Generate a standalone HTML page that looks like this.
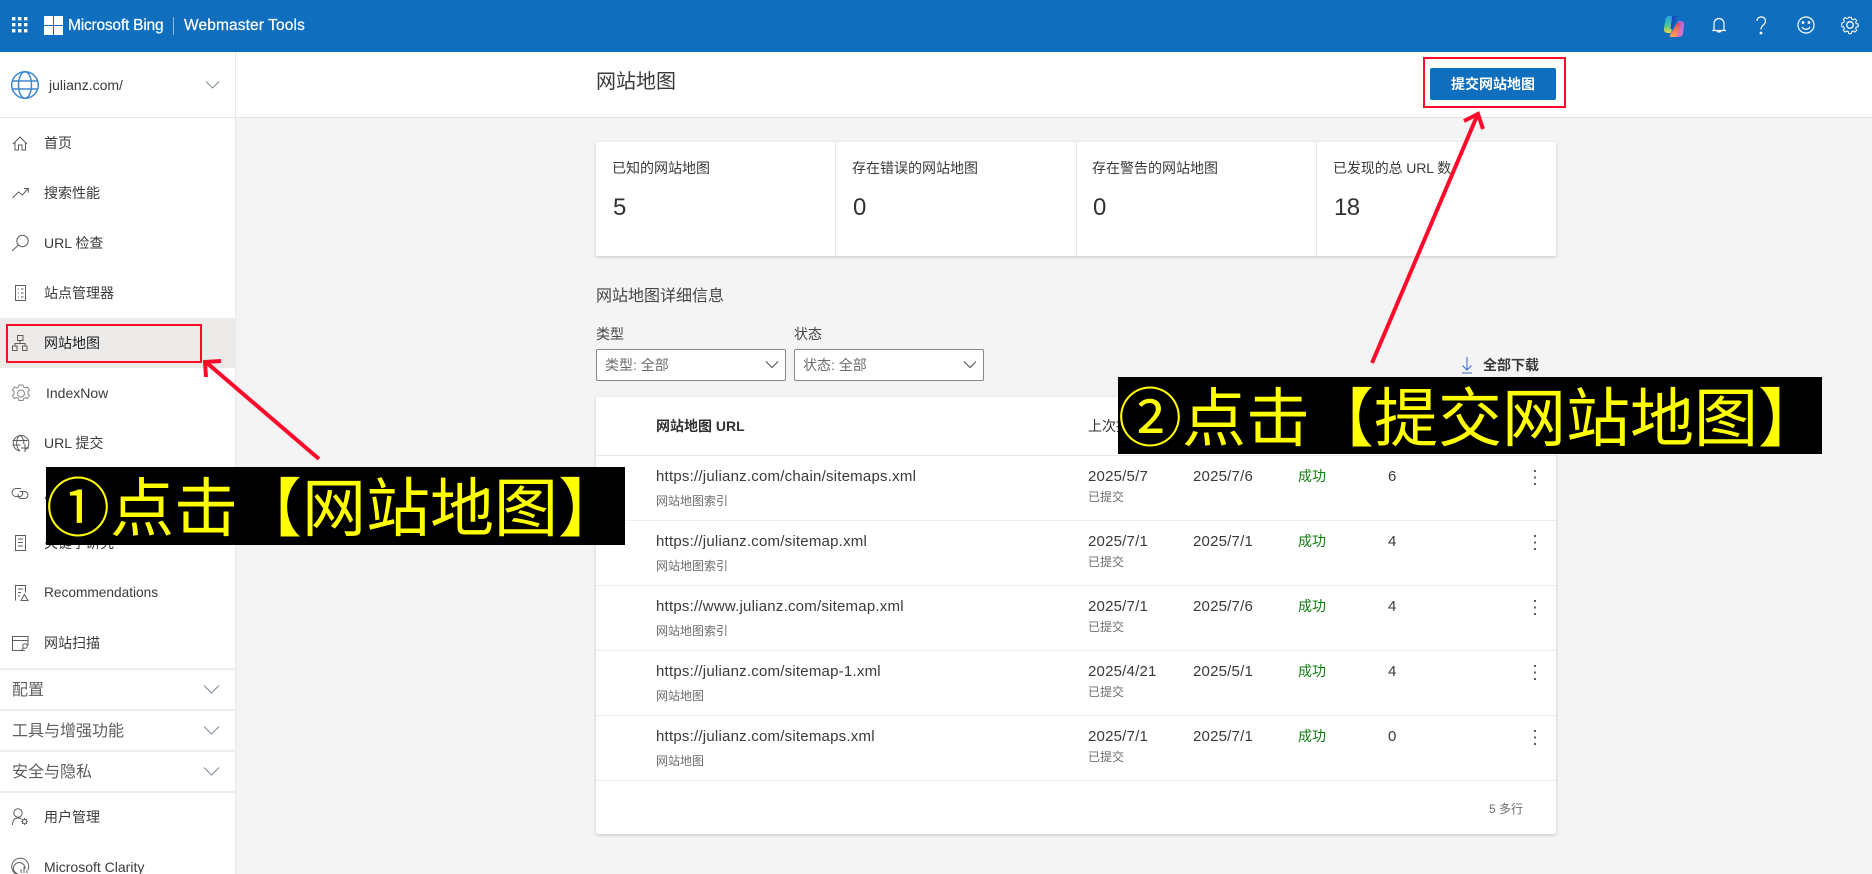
<!DOCTYPE html>
<html lang="zh-CN">
<head>
<meta charset="utf-8">
<title>网站地图 - Microsoft Bing Webmaster Tools</title>
<style>
html,body{margin:0;padding:0;width:1872px;height:874px;overflow:hidden;background:#f4f4f4}
body{position:relative;font-family:"Liberation Sans","Noto Sans CJK SC",sans-serif;color:#323130;font-size:14px}
div,svg{position:absolute}
.t{white-space:nowrap;line-height:20px;height:20px}
.nav{left:44px;color:#3b3a39}
.i{fill:none;stroke:#5f5d5b;stroke-width:1}
.grp{left:12px;font-size:16px;color:#605e5c}
.hl{left:0;width:235px;height:2px;background:#eeeeee}
.u{left:656px;font-size:15px;letter-spacing:.22px;color:#3b3a39}
.s{font-size:12px;color:#6f6d6b}
.d{font-size:15px;letter-spacing:.2px;color:#3b3a39}
.ok{left:1298px;color:#107c10}
.rl{left:596px;width:960px;height:1px;background:#eeeeee}
.lab{top:158px;color:#3b3a39}
.num{top:193px;font-size:24px;line-height:30px;height:30px;letter-spacing:-.6px;color:#323130}
.dd{top:349px;width:188px;height:30px;background:#fff;border:1px solid #8a8886;border-radius:2px}
.ann{background:#000;color:#ff0;font-size:64px;line-height:84px;white-space:nowrap;overflow:hidden}
</style>
</head>
<body>

<!-- top bar -->
<div style="left:0;top:0;width:1872px;height:52px;background:#106ebe"></div>
<svg style="left:0;top:0" width="66" height="52" fill="#fff">
<rect x="12" y="17" width="3.400" height="3.400"/><rect x="18" y="17" width="3.400" height="3.400"/><rect x="24" y="17" width="3.400" height="3.400"/>
<rect x="12" y="23" width="3.400" height="3.400"/><rect x="18" y="23" width="3.400" height="3.400"/><rect x="24" y="23" width="3.400" height="3.400"/>
<rect x="12" y="29" width="3.400" height="3.400"/><rect x="18" y="29" width="3.400" height="3.400"/><rect x="24" y="29" width="3.400" height="3.400"/>
<rect x="44" y="16" width="9" height="9"/><rect x="54" y="16" width="9" height="9"/><rect x="44" y="26" width="9" height="9"/><rect x="54" y="26" width="9" height="9"/>
</svg>
<div class="t" style="left:68px;top:16px;font-size:15.5px;color:#fff;letter-spacing:-.2px;-webkit-text-stroke:.2px #fff">Microsoft Bing</div>
<div style="left:173px;top:17px;width:1px;height:18px;background:#8ab8e0"></div>
<div class="t" style="left:184px;top:16px;font-size:15.5px;color:#fff;letter-spacing:.12px;-webkit-text-stroke:.2px #fff">Webmaster Tools</div>

<!-- copilot -->
<svg style="left:1660px;top:12px" width="28" height="28" viewBox="0 0 28 28">
<defs>
<linearGradient id="c1" x1="0" y1="0" x2="0" y2="1"><stop offset="0" stop-color="#2a9fe8"/><stop offset=".5" stop-color="#3cc6a0"/><stop offset="1" stop-color="#e8d83c"/></linearGradient>
<linearGradient id="c2" x1="0" y1="0" x2="1" y2="1"><stop offset="0" stop-color="#8a5ce8"/><stop offset="1" stop-color="#f078c0"/></linearGradient>
<linearGradient id="c3" x1="0" y1="0" x2="0" y2="1"><stop offset="0" stop-color="#e84860"/><stop offset="1" stop-color="#fba458"/></linearGradient>
</defs>
<path d="M8 4h7l-4 17H8c-3 0-4.500-2-4-4.500L5.500 7C6 5 7 4 8 4z" fill="url(#c1)"/>
<path d="M18 9h2.500c2.500 0 3.800 1.500 3.500 4l-1 8c-.3 2.500-2 4-4.500 4H14z" fill="url(#c2)"/>
<path d="M17 11h4l-3 11c-.5 2-2 3-3.500 3H10.500c-1 0-1-1-.5-2z" fill="url(#c3)"/>
<path d="M12 4h5l-4.500 13h-2z" fill="#1a4fc4"/>
</svg>
<!-- bell -->
<svg style="left:1708px;top:14px;fill:none;stroke:#fff;stroke-width:1.200" width="22" height="22" viewBox="0 0 22 22">
<path d="M6 15.500V9.500a5 5 0 0 1 10 0v6l1 1h-12zM9 16.500c.3 2 3.700 2 4 0"/>
</svg>
<!-- help -->
<svg style="left:1750px;top:14px;fill:none;stroke:#fff;stroke-width:1.200" width="22" height="24" viewBox="0 0 22 24">
<path d="M7 7c0-5.500 8.500-5.500 8.500 0 0 4-4.500 4-4.500 8.500"/><circle cx="11" cy="19" r=".8" fill="#fff"/>
</svg>
<!-- smile -->
<svg style="left:1794px;top:13px;fill:none;stroke:#fff;stroke-width:1.200" width="24" height="24" viewBox="0 0 24 24">
<circle cx="12" cy="12" r="8"/><path d="M8 14c2 3 6 3 8 0"/><circle cx="9" cy="9.500" r=".8" fill="#fff"/><circle cx="15" cy="9.500" r=".8" fill="#fff"/>
</svg>
<!-- gear -->
<svg style="left:1838px;top:13px;fill:none;stroke:#fff;stroke-width:1.300" width="24" height="24" viewBox="0 0 24 24">
<circle cx="12" cy="12" r="3.300"/>
<path d="M10.300 3.500h3.400l.5 2.500 1.800.8 2.200-1.400 2.400 2.400-1.400 2.200.8 1.800 2.500.5v3.400l-2.500.5-.8 1.800 1.400 2.200-2.400 2.400-2.200-1.400-1.800.8-.5 2.500h-3.400l-.5-2.500-1.800-.8-2.200 1.400-2.400-2.400 1.400-2.200-.8-1.800-2.500-.5V10.800l2.500-.5.8-1.800-1.400-2.200 2.400-2.400 2.200 1.400 1.800-.8z" transform="translate(12 12) scale(.78) translate(-12 -13.500)"/>
</svg>

<!-- sidebar -->
<div style="left:0;top:52px;width:235px;height:822px;background:#fff"></div>
<div style="left:235px;top:52px;width:1px;height:822px;background:#e8e8e8"></div>
<div style="left:236px;top:52px;width:1636px;height:65px;background:#fff"></div>
<div style="left:0;top:117px;width:1872px;height:1px;background:#e3e3e3"></div>

<svg style="left:10px;top:70px;fill:none;stroke:#3d87cf;stroke-width:1.500" width="30" height="30" viewBox="0 0 30 30">
<circle cx="15" cy="15" r="13.300"/><ellipse cx="15" cy="15" rx="6.500" ry="13.300"/><path d="M2.500 11h25M2.500 19h25"/>
</svg>
<div class="t" style="left:49px;top:75px;color:#3b3a39">julianz.com/</div>
<svg style="left:204px;top:80px;fill:none;stroke:#7f8a92;stroke-width:1" width="16" height="10"><path d="M2 1.500l6.500 6.500 6.500-6.500"/></svg>

<div style="left:0;top:318px;width:235px;height:50px;background:#ecebea"></div>

<div class="t nav" style="top:133px">首页</div>
<div class="t nav" style="top:183px">搜索性能</div>
<div class="t nav" style="top:233px">URL 检查</div>
<div class="t nav" style="top:283px">站点管理器</div>
<div class="t nav" style="top:333px;color:#201f1e">网站地图</div>
<div class="t nav" style="top:383px;left:46px">IndexNow</div>
<div class="t nav" style="top:433px">URL 提交</div>
<div class="t nav" style="top:483px">反向链接</div>
<div class="t nav" style="top:533px">关键字研究</div>
<div class="t nav" style="top:583px;font-size:13.7px">Recommendations</div>
<div class="t nav" style="top:633px">网站扫描</div>

<!-- sidebar icons -->
<svg style="left:0;top:118px" width="40" height="756" viewBox="0 118 40 756">
<g class="i">
<path d="M13 144l7-7 7 7M15 142.500V150h3.500v-5h3.500v5h3.500v-7.500"/>
<path d="M12.500 198l6-6 4 3 5.500-6.500M24 188.500h4.300v4"/>
<circle cx="22.500" cy="241" r="5.700"/><path d="M18.500 245l-6.500 6"/>
<path d="M15.500 285.500h10v15h-10zM18 289h1M18 293h1M18 297h1M21 289h2.500M21 293h2.500M21 297h2.500"/>
<path d="M17.500 335.500h5.500v5h-5.500zM12.500 346h4.500v4.500h-4.500zM22.500 346h4.500v4.500h-4.500zM20 340.500v3M15 346v-2.500h10v2.500"/>
<g stroke="#8a8886"><circle cx="21" cy="393.500" r="3.500"/>
<path d="M19 385h4l.5 2 2 1 2-1 2 3-1.500 1.500v2.500l1.500 1.500-2 3-2-1-2 1-.5 2h-4l-.5-2-2-1-2 1-2-3 1.500-1.500v-2.500L12.500 390l2-3 2 1 2-1z"/></g>
<path d="M25 450a7.800 7.800 0 1 0-5 1"/><path d="M20 435c-4.500 4-4.500 12 0 16M20 435c3 2.500 4 5.500 3.800 9M12.500 440.500h15M12.500 445h8"/><path d="M25 444v8M21 448h8"/>
<path d="M21 488.500h-5a4 4 0 0 0 0 8h4a3 3 0 0 0 2-5"/><path d="M19.500 491.500h5a3.500 3.500 0 0 1 0 7h-4a3 3 0 0 1-2-4.500"/>
<path d="M15.500 535.500h10v15h-10zM18 539h5M18 542.500h5M18 546h5"/>
<path d="M15.500 600.500v-15h10v7M18 589h5M18 592.500h3M18 596h2M21 600.500l3.500-6 3.500 6z"/>
<path d="M25 650.500H12.500v-14h15.500v9M12.500 640.500h15.500"/><circle cx="25" cy="646" r="2.300"/><path d="M23.500 648l-2.500 3"/>
<circle cx="18" cy="813" r="4.200"/><path d="M12.500 825c0-4.500 2-7 5.500-7 1.500 0 2.500.5 3.500 1"/><circle cx="24.500" cy="821.500" r="2"/><path d="M24.500 818v1.200M24.500 823.800v1.200M21 821.500h1.200M26.800 821.500H28M22 819l1 1M26 823l1 1M27 819l-1 1M23 823l-1 1"/>
<path d="M16 874a8.500 8.500 0 1 1 12-4M18 874a5.800 5.800 0 1 1 7-5"/><path d="M21 873v-4M24 873v-6M27 873v-3"/>
</g>
</svg>

<div class="hl" style="top:668px"></div>
<div class="t grp" style="top:681px">配置</div>
<svg style="left:203px;top:684px;fill:none;stroke:#7f8a92;stroke-width:1" width="17" height="11"><path d="M1 1.500l7.500 7.500 7.500-7.500"/></svg>
<div class="hl" style="top:709px"></div>
<div class="t grp" style="top:722px">工具与增强功能</div>
<svg style="left:203px;top:725px;fill:none;stroke:#7f8a92;stroke-width:1" width="17" height="11"><path d="M1 1.500l7.500 7.500 7.500-7.500"/></svg>
<div class="hl" style="top:750px"></div>
<div class="t grp" style="top:763px">安全与隐私</div>
<svg style="left:203px;top:766px;fill:none;stroke:#7f8a92;stroke-width:1" width="17" height="11"><path d="M1 1.500l7.500 7.500 7.500-7.500"/></svg>
<div class="hl" style="top:791px"></div>

<div class="t nav" style="top:807px">用户管理</div>
<div class="t nav" style="top:857px">Microsoft Clarity</div>

<!-- page title / button -->
<div class="t" style="left:596px;top:70px;font-size:20px;line-height:24px;height:24px;color:#3b3a39">网站地图</div>
<div style="left:1430px;top:68px;width:126px;height:32px;background:#106ebe;border-radius:2px"></div>
<div class="t" style="left:1430px;top:74px;width:126px;text-align:center;color:#fff;font-weight:bold">提交网站地图</div>

<!-- stats card -->
<div style="left:596px;top:142px;width:960px;height:114px;background:#fff;border-radius:2px;box-shadow:0 1px 3px rgba(0,0,0,.2)"></div>
<div style="left:835px;top:142px;width:1px;height:114px;background:#e3e3e3"></div>
<div style="left:1076px;top:142px;width:1px;height:114px;background:#e3e3e3"></div>
<div style="left:1316px;top:142px;width:1px;height:114px;background:#e3e3e3"></div>
<div class="t lab" style="left:612px">已知的网站地图</div>
<div class="t lab" style="left:852px">存在错误的网站地图</div>
<div class="t lab" style="left:1092px">存在警告的网站地图</div>
<div class="t lab" style="left:1333px;letter-spacing:-.1px">已发现的总 URL 数</div>
<div class="t num" style="left:613px">5</div>
<div class="t num" style="left:853px">0</div>
<div class="t num" style="left:1093px">0</div>
<div class="t num" style="left:1334px">18</div>

<!-- details -->
<div class="t" style="left:596px;top:287px;font-size:16px;color:#484644">网站地图详细信息</div>
<div class="t" style="left:596px;top:324px;color:#484644">类型</div>
<div class="t" style="left:794px;top:324px;color:#484644">状态</div>
<div class="dd" style="left:596px"></div>
<div class="dd" style="left:794px"></div>
<div class="t" style="left:605px;top:355px;color:#6f6d6b">类型: 全部</div>
<div class="t" style="left:803px;top:355px;color:#6f6d6b">状态: 全部</div>
<svg style="left:765px;top:360px;fill:none;stroke:#605e5c;stroke-width:1.200" width="14" height="10"><path d="M1 1.500l6 6 6-6"/></svg>
<svg style="left:963px;top:360px;fill:none;stroke:#605e5c;stroke-width:1.200" width="14" height="10"><path d="M1 1.500l6 6 6-6"/></svg>

<svg style="left:1460px;top:356px;fill:none;stroke:#3a66c4;stroke-width:1" width="14" height="18"><path d="M7 1v13M2.500 9.500L7 14l4.500-4.500M2 17h10"/></svg>
<div class="t" style="left:1483px;top:355px;font-weight:bold;color:#3b3a39">全部下载</div>

<!-- table -->
<div style="left:596px;top:397px;width:960px;height:437px;background:#fff;border-radius:2px;box-shadow:0 1px 3px rgba(0,0,0,.2)"></div>
<div class="t" style="left:656px;top:416px;font-weight:bold;color:#323130">网站地图 URL</div>
<div class="t" style="left:1088px;top:416px;color:#323130">上次提交</div>
<div class="rl" style="top:455px;background:#e6e6e6"></div>
<div class="rl" style="top:520px"></div>
<div class="rl" style="top:585px"></div>
<div class="rl" style="top:650px"></div>
<div class="rl" style="top:715px"></div>
<div class="rl" style="top:780px"></div>

<!-- row 1 -->
<div class="t u" style="top:467px">https://julianz.com/chain/sitemaps.xml</div>
<div class="t s" style="left:656px;top:491px">网站地图索引</div>
<div class="t d" style="left:1088px;top:467px">2025/5/7</div>
<div class="t s" style="left:1088px;top:487px">已提交</div>
<div class="t d" style="left:1193px;top:467px">2025/7/6</div>
<div class="t ok" style="top:466px">成功</div>
<div class="t d" style="left:1388px;top:467px">6</div>
<!-- row 2 -->
<div class="t u" style="top:532px">https://julianz.com/sitemap.xml</div>
<div class="t s" style="left:656px;top:556px">网站地图索引</div>
<div class="t d" style="left:1088px;top:532px">2025/7/1</div>
<div class="t s" style="left:1088px;top:552px">已提交</div>
<div class="t d" style="left:1193px;top:532px">2025/7/1</div>
<div class="t ok" style="top:531px">成功</div>
<div class="t d" style="left:1388px;top:532px">4</div>
<!-- row 3 -->
<div class="t u" style="top:597px">https://www.julianz.com/sitemap.xml</div>
<div class="t s" style="left:656px;top:621px">网站地图索引</div>
<div class="t d" style="left:1088px;top:597px">2025/7/1</div>
<div class="t s" style="left:1088px;top:617px">已提交</div>
<div class="t d" style="left:1193px;top:597px">2025/7/6</div>
<div class="t ok" style="top:596px">成功</div>
<div class="t d" style="left:1388px;top:597px">4</div>
<!-- row 4 -->
<div class="t u" style="top:662px">https://julianz.com/sitemap-1.xml</div>
<div class="t s" style="left:656px;top:686px">网站地图</div>
<div class="t d" style="left:1088px;top:662px">2025/4/21</div>
<div class="t s" style="left:1088px;top:682px">已提交</div>
<div class="t d" style="left:1193px;top:662px">2025/5/1</div>
<div class="t ok" style="top:661px">成功</div>
<div class="t d" style="left:1388px;top:662px">4</div>
<!-- row 5 -->
<div class="t u" style="top:727px">https://julianz.com/sitemaps.xml</div>
<div class="t s" style="left:656px;top:751px">网站地图</div>
<div class="t d" style="left:1088px;top:727px">2025/7/1</div>
<div class="t s" style="left:1088px;top:747px">已提交</div>
<div class="t d" style="left:1193px;top:727px">2025/7/1</div>
<div class="t ok" style="top:726px">成功</div>
<div class="t d" style="left:1388px;top:727px">0</div>

<!-- kebabs -->
<svg style="left:1530px;top:460px" width="10" height="300" fill="#605e5c">
<g><rect x="4" y="10" width="2" height="2"/><rect x="4" y="16.500" width="2" height="2"/><rect x="4" y="23" width="2" height="2"/></g>
<g transform="translate(0 65)"><rect x="4" y="10" width="2" height="2"/><rect x="4" y="16.500" width="2" height="2"/><rect x="4" y="23" width="2" height="2"/></g>
<g transform="translate(0 130)"><rect x="4" y="10" width="2" height="2"/><rect x="4" y="16.500" width="2" height="2"/><rect x="4" y="23" width="2" height="2"/></g>
<g transform="translate(0 195)"><rect x="4" y="10" width="2" height="2"/><rect x="4" y="16.500" width="2" height="2"/><rect x="4" y="23" width="2" height="2"/></g>
<g transform="translate(0 260)"><rect x="4" y="10" width="2" height="2"/><rect x="4" y="16.500" width="2" height="2"/><rect x="4" y="23" width="2" height="2"/></g>
</svg>
<div class="t s" style="left:1489px;top:799px">5 多行</div>

<!-- annotations -->
<svg style="left:0;top:0" width="1872" height="874" fill="none" stroke="#ff0a2a">
<rect x="7" y="325" width="194" height="37" stroke-width="2"/>
<rect x="1424" y="58" width="141" height="49" stroke-width="2"/>
<path d="M319 459L207 363" stroke-width="4"/>
<path d="M221 361l-16 1 1 15" stroke-width="4"/>
<path d="M1372 363L1477 116" stroke-width="4"/>
<path d="M1464 121l14-7 5 15" stroke-width="4"/>
</svg>
<div class="ann" style="left:46px;top:467px;width:579px;height:78px">①点击【网站地图】</div>
<div class="ann" style="left:1118px;top:377px;width:704px;height:77px">②点击【提交网站地图】</div>

</body>
</html>
